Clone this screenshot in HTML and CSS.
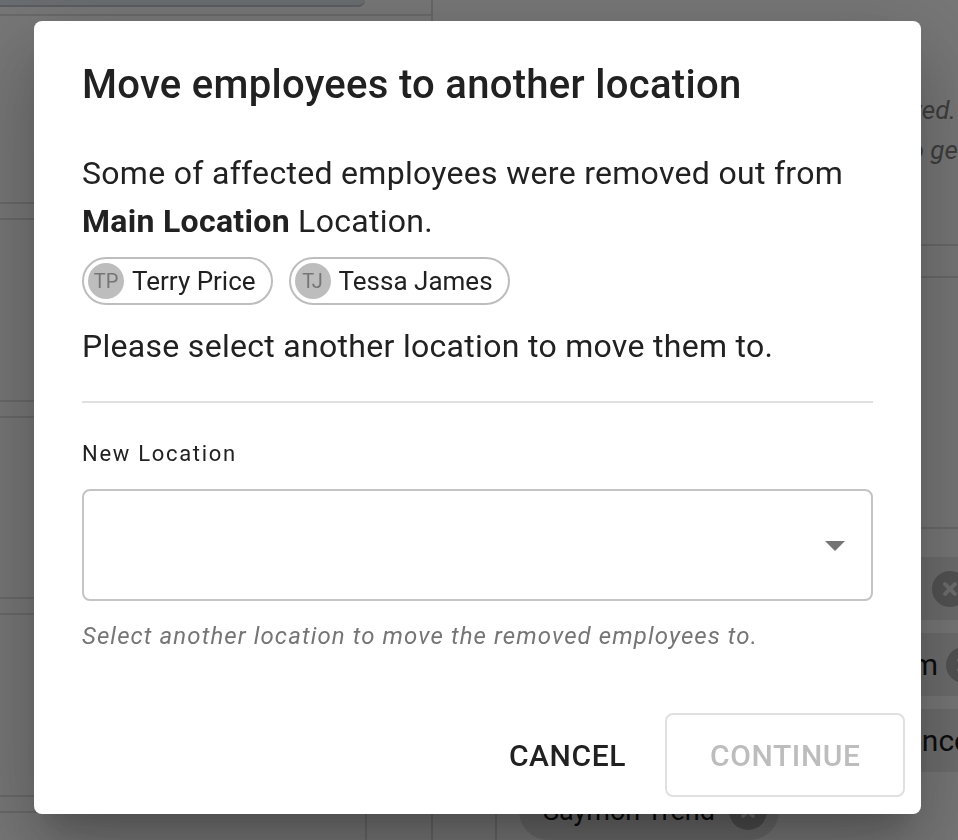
FILE: index.html
```html
<!DOCTYPE html>
<html lang="en">
<head>
<meta charset="utf-8">
<title>Move employees</title>
<link rel="stylesheet" href="styles.css">
</head>
<body>
<div class="page">
  <aside class="left">
    <div class="topbar"></div>
    <div class="lspacer"></div>
    <div class="lblock b1"></div>
    <div class="lstrip"></div>
    <div class="lblock b2"></div>
    <div class="lstrip"></div>
    <div class="lblock b3"></div>
    <div class="lstrip"></div>
    <div class="lblock b4"></div>
    <div class="lstrip"></div>
    <div class="lfoot"><div class="lcell"></div></div>
  </aside>
  <main class="right">
    <div class="notes">
      <p class="note"><span>Unselected employees will be removed.</span></p>
      <p class="note note-cut"><span>Contact an admin to get</span></p>
    </div>
    <div class="rsub"></div>
    <div class="rgap"></div>
    <div class="bands">
      <div class="band"><span class="bx bx-1"></span></div>
      <div class="band"><span class="btext">Kim</span><span class="bx bx-2"></span></div>
      <div class="band"><span class="btext btext-cut">Lawrence</span></div>
    </div>
    <div class="rfoot">
      <div class="rcell"></div>
      <div class="bgchip"><span>Saymon Trend</span><span class="bx bx-chip"></span></div>
    </div>
  </main>
</div>

<div class="backdrop"></div>
<div class="dialog-wrap">
  <section class="dialog" role="dialog" aria-labelledby="dlg-title">
    <h2 class="dialog-title" id="dlg-title">Move employees to another location</h2>
    <div class="dialog-content">
      <p class="text">Some of affected employees were removed out from <strong>Main Location</strong> Location.</p>
      <div class="chips">
        <span class="chip"><span class="avatar">TP</span><span class="chip-label">Terry Price</span></span>
        <span class="chip"><span class="avatar">TJ</span><span class="chip-label">Tessa James</span></span>
      </div>
      <p class="text">Please select another location to move them to.</p>
      <hr class="divider">
      <label class="field-label" for="loc">New Location</label>
      <div class="select" id="loc">
        <svg class="arrow" viewBox="0 0 24 24" width="48" height="48" aria-hidden="true"><path d="M7 10l5 5 5-5z"/></svg>
      </div>
      <p class="helper">Select another location to move the removed employees to.</p>
    </div>
    <div class="dialog-actions">
      <button class="btn btn-text" type="button">Cancel</button>
      <button class="btn btn-outlined" type="button" disabled>Continue</button>
    </div>
  </section>
</div>
</body>
</html>
```

FILE: styles.css
```css
* { box-sizing: border-box; }
html, body { margin: 0; padding: 0; }
body {
  width: 958px;
  height: 840px;
  overflow: hidden;
  background: #eeeeee;
  font-family: Roboto, "Noto Sans", "Liberation Sans", sans-serif;
  color: #212121;
}

/* ---------- background page (dimmed) ---------- */
.page { display: flex; width: 958px; height: 840px; overflow: hidden; }
.left {
  width: 433px;
  flex: none;
  border-right: 2px solid #cdcdcd;
  display: flex;
  flex-direction: column;
}
.topbar {
  width: 365px;
  height: 7px;
  background: #d5dbe2;
  border-bottom: 2px solid #b3bac2;
  border-radius: 0 0 8px 0;
}
.lspacer { height: 9px; border-bottom: 2px solid #d2d2d2; }
.lblock { border-bottom: 2px solid #d2d2d2; }
.b1 { height: 188px; }
.b2 { height: 182px; }
.b3 { height: 181px; }
.b4 { height: 182px; }
.lstrip { height: 16px; border-bottom: 2px solid #d2d2d2; }
.lfoot { flex: 1; display: flex; }
.lcell { width: 367px; border-right: 2px solid #d0d0d0; }

.right { flex: 1; min-width: 0; display: flex; flex-direction: column; }
.notes {
  height: 252px;
  padding-top: 90px;
  border-bottom: 2px solid #d2d2d2;
}
.note {
  margin: 0;
  display: flex;
  justify-content: flex-end;
  font-size: 26px;
  line-height: 40px;
  font-style: italic;
  color: #7c7c7c;
  white-space: nowrap;
  padding-right: 2px;
}
.note-cut { margin-right: -10px; }
.rsub { height: 33px; border-bottom: 2px solid #d2d2d2; }
.rgap { height: 260px; border-bottom: 2px solid #d2d2d2; }
.bands { display: flex; flex-direction: column; gap: 13px; padding-top: 28px; }
.band {
  height: 63px;
  background: #dadada;
  display: flex;
  align-items: center;
  justify-content: flex-end;
  overflow: hidden;
}
.btext { font-size: 30px; color: #1a1a1a; white-space: nowrap; }
.btext-cut { margin-right: -12px; }
.bx {
  flex: none;
  width: 36px;
  height: 36px;
  border-radius: 50%;
  background: #a6a6a6;
  position: relative;
}
.bx::before, .bx::after {
  content: "";
  position: absolute;
  left: 50%;
  top: 50%;
  width: 18px;
  height: 4px;
  margin: -2px 0 0 -9px;
  background: #dcdcdc;
  border-radius: 2px;
  transform: rotate(45deg);
}
.bx::after { transform: rotate(-45deg); }
.bx-1 { margin-right: -10px; }
.bx-2 { margin-left: 8px; margin-right: -24px; }
.rfoot { flex: 1; display: flex; align-items: flex-start; }
.rcell { width: 64px; align-self: stretch; border-right: 2px solid #cdcdcd; }
.bgchip {
  margin: 10px 0 0 22px;
  height: 58px;
  border-radius: 29px;
  background: #d2d2d2;
  display: flex;
  align-items: center;
  gap: 14px;
  padding: 0 12px 0 24px;
  font-size: 27px;
  color: #111;
}
.bx-chip { width: 38px; height: 38px; background: #9c9c9c; }

/* ---------- modal ---------- */
.backdrop {
  position: fixed;
  inset: 0;
  background: rgba(0, 0, 0, 0.5);
}
.dialog-wrap {
  position: fixed;
  inset: 0;
  display: flex;
  align-items: flex-start;
  padding: 21px 0 0 34px;
}
.dialog {
  width: 887px;
  background: #ffffff;
  border-radius: 8px;
  box-shadow: 0 22px 30px -14px rgba(0,0,0,0.2),
              0 48px 76px 6px rgba(0,0,0,0.14),
              0 18px 92px 16px rgba(0,0,0,0.12);
  display: flex;
  flex-direction: column;
}
.dialog-title {
  margin: 0;
  padding: 32px 48px 32px;
  font-size: 40px;
  font-weight: 500;
  line-height: 64px;
  letter-spacing: 0.3px;
  color: #212121;
}
.dialog-content { padding: 0 48px 57px; }
.text {
  margin: 0;
  font-size: 32px;
  line-height: 48px;
  letter-spacing: 0.3px;
  color: #212121;
}
.text strong { font-weight: 700; }
.chips { display: flex; gap: 16px; margin: 12px 0 17px; }
.chip {
  display: inline-flex;
  align-items: center;
  height: 48px;
  border: 2px solid #bdbdbd;
  border-radius: 24px;
  padding: 0 15px 0 4px;
}
.avatar {
  width: 36px;
  height: 36px;
  border-radius: 50%;
  background: #bdbdbd;
  color: #757575;
  font-size: 20px;
  display: inline-flex;
  align-items: center;
  justify-content: center;
}
.chip-label { padding-left: 8px; font-size: 26px; color: #212121; }
.divider {
  margin: 31px 0 0;
  border: 0;
  height: 2px;
  background: #e0e0e0;
}
.field-label {
  display: block;
  margin-top: 34px;
  font-size: 22px;
  line-height: 33px;
  letter-spacing: 1.7px;
  color: #212121;
}
.select {
  margin-top: 19px;
  height: 112px;
  border: 2px solid #c4c4c4;
  border-radius: 8px;
  display: flex;
  align-items: center;
  justify-content: flex-end;
  padding-right: 12px;
}
.arrow { fill: #757575; display: block; }
.helper {
  margin: 15px 0 0;
  font-size: 24px;
  line-height: 40px;
  font-style: italic;
  letter-spacing: 1.1px;
  color: #757575;
}
.dialog-actions {
  display: flex;
  justify-content: flex-end;
  gap: 16px;
  padding: 0 16px 17px;
}
.btn {
  height: 84px;
  font-family: inherit;
  font-size: 30px;
  font-weight: 500;
  letter-spacing: 0.6px;
  text-transform: uppercase;
  background: transparent;
  border-radius: 8px;
  cursor: pointer;
}
.btn-text { border: 0; padding: 0 23px; color: #212121; }
.btn-outlined {
  border: 2px solid #e0e0e0;
  padding: 0 43px;
  color: #bdbdbd;
  width: 240px;
}
```
